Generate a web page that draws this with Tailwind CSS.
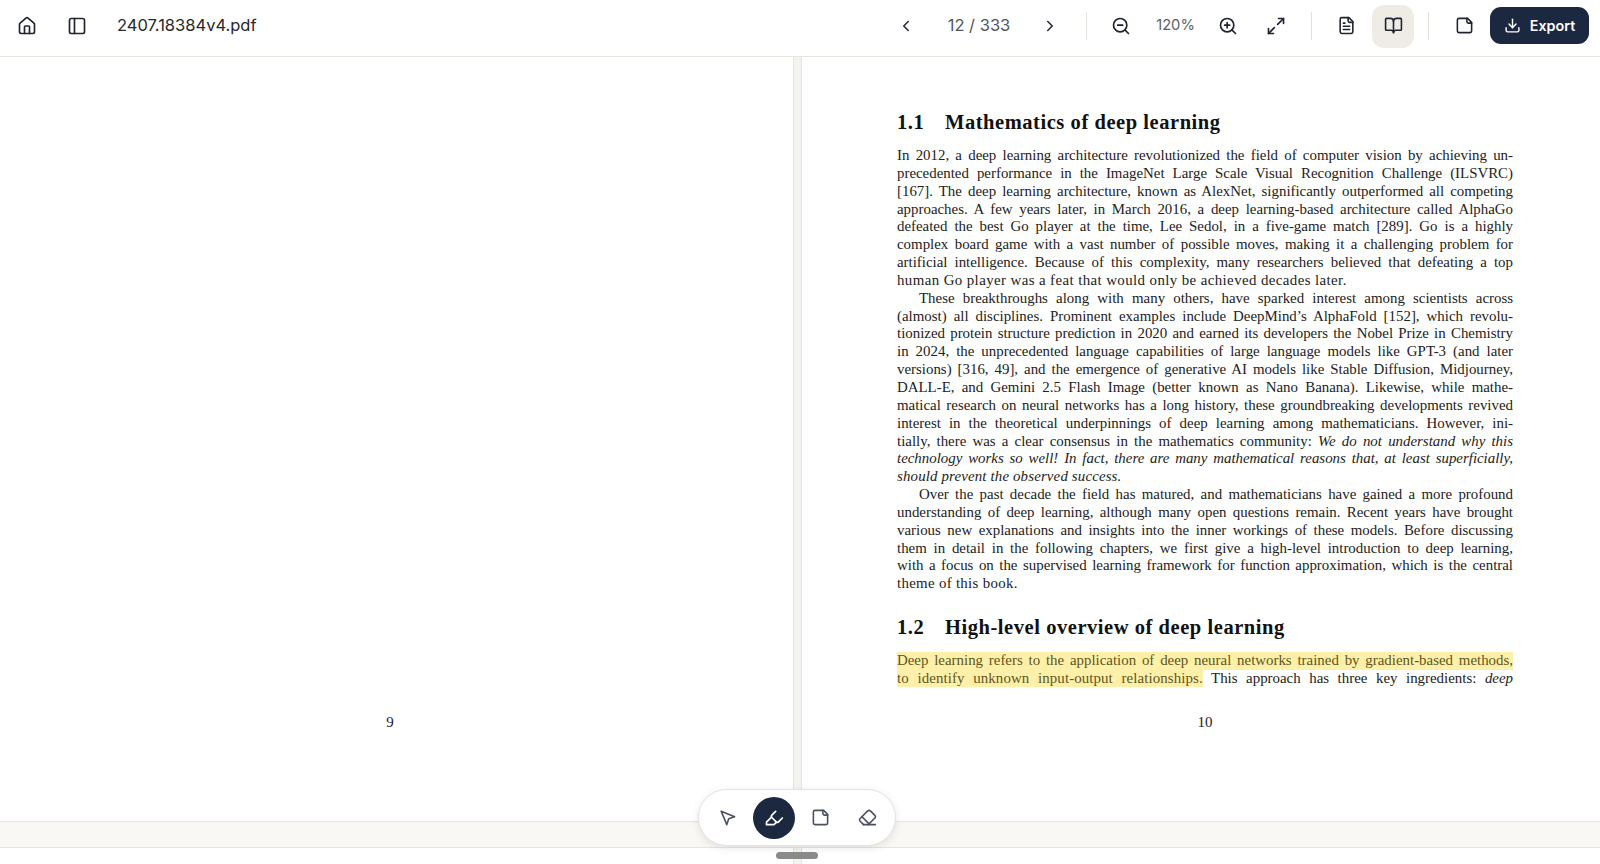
<!DOCTYPE html>
<html lang="en">
<head>
    <meta charset="UTF-8">
    <meta name="viewport" content="width=device-width, initial-scale=1.0">
    <title>2407.18384v4.pdf</title>
    <script src="https://cdn.jsdelivr.net/npm/@tailwindcss/browser@4"></script>
</head>
<body class="bg-white font-['Inter',sans-serif] text-[#1c1c1c] overflow-hidden">
<div class="relative w-[1600px] h-[864px] overflow-hidden flex flex-col">

    <!-- Top bar -->
    <header class="h-[57px] shrink-0 flex items-center border-b border-[#e8e5df] bg-white pl-[5px] pr-[11px] pb-[5px]">
        <button class="w-[44px] h-[44px] flex items-center justify-center">
            <svg class="w-[20px] h-[20px]" viewBox="0 0 24 24" fill="none" stroke="#1f2430" stroke-width="2" stroke-linecap="round" stroke-linejoin="round"><path d="M15 21v-8a1 1 0 0 0-1-1h-4a1 1 0 0 0-1 1v8"/><path d="M3 10a2 2 0 0 1 .709-1.528l7-5.999a2 2 0 0 1 2.582 0l7 5.999A2 2 0 0 1 21 10v9a2 2 0 0 1-2 2H5a2 2 0 0 1-2-2z"/></svg>
        </button>
        <button class="w-[44px] h-[44px] ml-[6px] flex items-center justify-center">
            <svg class="w-[20px] h-[20px]" viewBox="0 0 24 24" fill="none" stroke="#1f2430" stroke-width="2" stroke-linecap="round" stroke-linejoin="round"><rect x="3" y="3" width="18" height="18" rx="2"/><path d="M9 3v18"/></svg>
        </button>
        <span class="ml-[18px] text-[16.5px] text-[#26282c]">2407.18384v4.pdf</span>

        <div class="ml-auto flex items-center">
            <button class="w-[44px] h-[44px] flex items-center justify-center">
                <svg class="w-[18px] h-[18px]" viewBox="0 0 24 24" fill="none" stroke="#1f2430" stroke-width="2" stroke-linecap="round" stroke-linejoin="round"><path d="m15 18-6-6 6-6"/></svg>
            </button>
            <span class="w-[100px] pl-[2px] text-center text-[16.5px] text-[#4f5562]">12 / 333</span>
            <button class="w-[44px] h-[44px] flex items-center justify-center">
                <svg class="w-[18px] h-[18px]" viewBox="0 0 24 24" fill="none" stroke="#1f2430" stroke-width="2" stroke-linecap="round" stroke-linejoin="round"><path d="m9 18 6-6-6-6"/></svg>
            </button>
            <div class="w-px h-[28px] ml-[14px] bg-[#e3e0da]"></div>
            <button class="w-[44px] h-[44px] ml-[12px] flex items-center justify-center">
                <svg class="w-[20px] h-[20px]" viewBox="0 0 24 24" fill="none" stroke="#1f2430" stroke-width="2" stroke-linecap="round" stroke-linejoin="round"><circle cx="11" cy="11" r="8"/><path d="m21 21-4.35-4.35"/><path d="M8 11h6"/></svg>
            </button>
            <span class="w-[63px] pl-[2px] text-center text-[14.7px] text-[#5b606b]">120%</span>
            <button class="w-[44px] h-[44px] flex items-center justify-center">
                <svg class="w-[20px] h-[20px]" viewBox="0 0 24 24" fill="none" stroke="#1f2430" stroke-width="2" stroke-linecap="round" stroke-linejoin="round"><circle cx="11" cy="11" r="8"/><path d="m21 21-4.35-4.35"/><path d="M8 11h6"/><path d="M11 8v6"/></svg>
            </button>
            <button class="w-[44px] h-[44px] ml-[4px] flex items-center justify-center">
                <svg class="w-[20px] h-[20px]" viewBox="0 0 24 24" fill="none" stroke="#1f2430" stroke-width="2" stroke-linecap="round" stroke-linejoin="round"><path d="M15 3h6v6"/><path d="m21 3-7 7"/><path d="m3 21 7-7"/><path d="M9 21H3v-6"/></svg>
            </button>
            <div class="w-px h-[28px] ml-[13px] bg-[#e3e0da]"></div>
            <button class="w-[44px] h-[44px] ml-[12px] flex items-center justify-center">
                <svg class="w-[19px] h-[19px]" viewBox="0 0 24 24" fill="none" stroke="#1f2430" stroke-width="2" stroke-linecap="round" stroke-linejoin="round"><path d="M15 2H6a2 2 0 0 0-2 2v16a2 2 0 0 0 2 2h12a2 2 0 0 0 2-2V7Z"/><path d="M14 2v4a2 2 0 0 0 2 2h4"/><path d="M10 9H8"/><path d="M16 13H8"/><path d="M16 17H8"/></svg>
            </button>
            <button class="w-[42px] h-[43px] ml-[4px] mt-[2px] pb-[2px] rounded-[12px] bg-[#efece6] flex items-center justify-center">
                <svg class="w-[19px] h-[19px]" viewBox="0 0 24 24" fill="none" stroke="#1f2430" stroke-width="2" stroke-linecap="round" stroke-linejoin="round"><path d="M12 7v14"/><path d="M3 18a1 1 0 0 1-1-1V4a1 1 0 0 1 1-1h5a4 4 0 0 1 4 4 4 4 0 0 1 4-4h5a1 1 0 0 1 1 1v13a1 1 0 0 1-1 1h-6a3 3 0 0 0-3 3 3 3 0 0 0-3-3z"/></svg>
            </button>
            <div class="w-px h-[28px] ml-[14px] bg-[#e3e0da]"></div>
            <button class="w-[44px] h-[44px] ml-[13px] flex items-center justify-center">
                <svg class="w-[19px] h-[19px]" viewBox="0 0 24 24" fill="none" stroke="#1f2430" stroke-width="2" stroke-linecap="round" stroke-linejoin="round"><path d="M16 3H5a2 2 0 0 0-2 2v14a2 2 0 0 0 2 2h14a2 2 0 0 0 2-2V8Z"/><path d="M15 3v4a2 2 0 0 0 2 2h4"/></svg>
            </button>
            <button class="w-[99px] h-[37px] ml-[4px] rounded-[11px] bg-[#1b2840] text-white flex items-center justify-center gap-[9px] text-[14.3px] font-semibold">
                <svg class="w-[17px] h-[17px]" viewBox="0 0 24 24" fill="none" stroke="currentColor" stroke-width="2" stroke-linecap="round" stroke-linejoin="round"><path d="M21 15v4a2 2 0 0 1-2 2H5a2 2 0 0 1-2-2v-4"/><path d="m7 10 5 5 5-5"/><path d="M12 15V3"/></svg>
                Export
            </button>
        </div>
    </header>

    <!-- Page spread -->
    <main class="h-[764px] shrink-0 flex font-['Liberation_Serif',serif] text-[#222]">
        <section class="w-[793px] shrink-0 bg-white relative">
            <div class="absolute top-[656px] left-0 w-[780px] text-center text-[15px] leading-[18px]">9</div>
        </section>
        <div class="w-[9px] shrink-0 bg-[#f5f3ee] border-x border-[#e6e3dc]"></div>
        <section class="flex-1 bg-white pl-[95px] pr-[87px] pt-[52px] relative">
            <h2 class="text-[20.5px] font-bold leading-[26px] tracking-[0.55px] text-[#111] flex"><span class="w-[48px]">1.1</span><span>Mathematics of deep learning</span></h2>
            <div class="mt-[12px] text-[14.9px] leading-[17.85px] text-justify [text-align-last:justify]">
                <div>In 2012, a deep learning architecture revolutionized the field of computer vision by achieving un-</div>
                <div>precedented performance in the ImageNet Large Scale Visual Recognition Challenge (ILSVRC)</div>
                <div>[167]. The deep learning architecture, known as AlexNet, significantly outperformed all competing</div>
                <div>approaches. A few years later, in March 2016, a deep learning-based architecture called AlphaGo</div>
                <div>defeated the best Go player at the time, Lee Sedol, in a five-game match [289]. Go is a highly</div>
                <div>complex board game with a vast number of possible moves, making it a challenging problem for</div>
                <div>artificial intelligence. Because of this complexity, many researchers believed that defeating a top</div>
                <div class="[text-align-last:left] tracking-[0.4px]">human Go player was a feat that would only be achieved decades later.</div>
                <div class="pl-[22px]">These breakthroughs along with many others, have sparked interest among scientists across</div>
                <div>(almost) all disciplines. Prominent examples include DeepMind’s AlphaFold [152], which revolu-</div>
                <div>tionized protein structure prediction in 2020 and earned its developers the Nobel Prize in Chemistry</div>
                <div>in 2024, the unprecedented language capabilities of large language models like GPT-3 (and later</div>
                <div>versions) [316, 49], and the emergence of generative AI models like Stable Diffusion, Midjourney,</div>
                <div>DALL-E, and Gemini 2.5 Flash Image (better known as Nano Banana). Likewise, while mathe-</div>
                <div>matical research on neural networks has a long history, these groundbreaking developments revived</div>
                <div>interest in the theoretical underpinnings of deep learning among mathematicians. However, ini-</div>
                <div>tially, there was a clear consensus in the mathematics community: <em>We do not understand why this</em></div>
                <div><em>technology works so well! In fact, there are many mathematical reasons that, at least superficially,</em></div>
                <div class="[text-align-last:left] tracking-[0.15px]"><em>should prevent the observed success.</em></div>
                <div class="pl-[22px]">Over the past decade the field has matured, and mathematicians have gained a more profound</div>
                <div>understanding of deep learning, although many open questions remain. Recent years have brought</div>
                <div>various new explanations and insights into the inner workings of these models. Before discussing</div>
                <div>them in detail in the following chapters, we first give a high-level introduction to deep learning,</div>
                <div>with a focus on the supervised learning framework for function approximation, which is the central</div>
                <div class="[text-align-last:left] tracking-[0.3px]">theme of this book.</div>
            </div>
            <h2 class="mt-[21px] text-[20.5px] font-bold leading-[26px] tracking-[0.55px] text-[#111] flex"><span class="w-[48px]">1.2</span><span>High-level overview of deep learning</span></h2>
            <div class="mt-[12px] text-[14.9px] leading-[17.85px] text-justify [text-align-last:justify]">
                <div class="bg-[#fef0a8] text-[#5f5620]">Deep learning refers to the application of deep neural networks trained by gradient-based methods,</div>
                <div><span class="bg-[#fef0a8] text-[#5f5620] py-[1px] tracking-[0.1px]">to identify unknown input-output relationships.</span> This approach has three key ingredients: <em>deep</em></div>
            </div>
            <div class="absolute top-[656px] left-[95px] right-[87px] text-center text-[15px] leading-[18px]">10</div>
        </section>
    </main>

    <!-- Next page peeking under the gap -->
    <div class="h-[27px] shrink-0 bg-[#f9f8f5] border-y border-[#e8e5df] shadow-[0_-1px_4px_rgba(0,0,0,0.10)]"></div>
    <div class="flex-1 flex">
        <div class="w-[793px] bg-white"></div>
        <div class="w-[9px] bg-[#f5f3ee] border-x border-[#e6e3dc]"></div>
        <div class="flex-1 bg-white"></div>
    </div>

    <!-- Floating tools -->
    <div class="absolute left-[698px] top-[789px] w-[198px] h-[57px] rounded-full bg-white border border-[#e6e3dc] shadow-[0_2px_8px_rgba(0,0,0,0.10)] flex items-center pl-[7px]">
        <button class="w-[42px] h-[42px] flex items-center justify-center">
            <svg class="w-[19px] h-[19px]" viewBox="0 0 24 24" fill="none" stroke="#4b5160" stroke-width="2" stroke-linecap="round" stroke-linejoin="round"><path d="m4 4 7.07 17 2.51-7.39L21 11.07z"/></svg>
        </button>
        <button class="w-[42px] h-[42px] ml-[5px] rounded-full bg-[#1b2840] flex items-center justify-center">
            <svg class="w-[20px] h-[20px]" viewBox="0 0 24 24" fill="none" stroke="#fff" stroke-width="2" stroke-linecap="round" stroke-linejoin="round"><path d="m9 11-6 6v3h9l3-3"/><path d="m22 12-4.6 4.6a2 2 0 0 1-2.8 0l-5.2-5.2a2 2 0 0 1 0-2.8L14 4"/></svg>
        </button>
        <button class="w-[42px] h-[42px] ml-[4px] flex items-center justify-center">
            <svg class="w-[19px] h-[19px]" viewBox="0 0 24 24" fill="none" stroke="#4b5160" stroke-width="2" stroke-linecap="round" stroke-linejoin="round"><path d="M16 3H5a2 2 0 0 0-2 2v14a2 2 0 0 0 2 2h14a2 2 0 0 0 2-2V8Z"/><path d="M15 3v4a2 2 0 0 0 2 2h4"/></svg>
        </button>
        <button class="w-[42px] h-[42px] ml-[5px] flex items-center justify-center">
            <svg class="w-[19px] h-[19px]" viewBox="0 0 24 24" fill="none" stroke="#4b5160" stroke-width="2" stroke-linecap="round" stroke-linejoin="round"><path d="m7 21-4.3-4.3c-1-1-1-2.5 0-3.4l9.6-9.6c1-1 2.5-1 3.4 0l5.6 5.6c1 1 1 2.5 0 3.4L13 21"/><path d="M22 21H7"/><path d="m5 11 9 9"/></svg>
        </button>
    </div>
    <div class="absolute left-[776px] top-[852px] w-[42px] h-[7px] rounded-full bg-[#8a8a8a]"></div>
</div>
</body>
</html>
